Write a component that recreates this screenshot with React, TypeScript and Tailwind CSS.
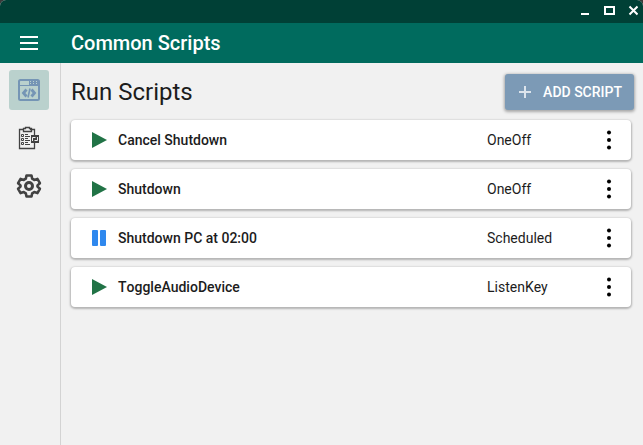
import React from "react";

type Script = { name: string; kind: string; running?: boolean };

const scripts: Script[] = [
  { name: "Cancel Shutdown", kind: "OneOff" },
  { name: "Shutdown", kind: "OneOff" },
  { name: "Shutdown PC at 02:00", kind: "Scheduled", running: true },
  { name: "ToggleAudioDevice", kind: "ListenKey" },
];

function TitleBar() {
  return (
    <div className="flex h-[23px] justify-end bg-[#004036] text-white">
      <button aria-label="Minimize" className="flex w-6 items-center justify-center">
        <svg width="12" height="13" viewBox="0 0 12 13" shapeRendering="crispEdges" aria-hidden="true">
          <path d="M2 8h8v2H2z" fill="currentColor" />
        </svg>
      </button>
      <button aria-label="Maximize" className="flex w-6 items-center justify-center">
        <svg width="12" height="13" viewBox="0 0 12 13" shapeRendering="crispEdges" aria-hidden="true">
          <path d="M1 1h11v9H1zM3 3v5h7V3z" fill="currentColor" fillRule="evenodd" />
        </svg>
      </button>
      <button aria-label="Close" className="flex w-[22px] items-center justify-center">
        <svg width="12" height="13" viewBox="0 0 12 13" aria-hidden="true">
          <path d="M3.500 1.500l8 8M11.500 1.500l-8 8" stroke="currentColor" strokeWidth="2" />
        </svg>
      </button>
    </div>
  );
}

function CodeWindowIcon() {
  return (
    <svg width="24" height="24" viewBox="0 0 24 24" fill="none" stroke="#7595b5" aria-hidden="true">
      <rect x="2" y="2" width="20" height="20" rx="1.5" strokeWidth="2" />
      <path d="M2 7.500h20" />
      <path d="M12 2h10v5H12z" fill="#7595b5" stroke="none" />
      <path d="M13 3h1v1h-1zM16 3h1v1h-1zM19 3h1v1h-1zM13 5h1v1h-1zM16 5h1v1h-1zM19 5h1v1h-1z" fill="#bad1cd" stroke="none" />
      <path d="M9.500 11.500l-3 3.500 3 3.500M14.500 11.500l3 3.500-3 3.500" strokeWidth="2.800" />
      <path d="M13 10.500l-2 9" strokeWidth="1.600" />
    </svg>
  );
}

function ClipboardIcon() {
  return (
    <svg width="24" height="24" viewBox="0 0 24 24" fill="none" stroke="#424242" aria-hidden="true">
      <path d="M7 3.500H2.500v19h15V17M17.500 9V3.500H13" strokeWidth="1.300" />
      <path d="M6.500 5.500v-3H8.500v-1h4v1h2v3z" strokeWidth="1.300" />
      <path d="M4.500 8.500h2v2h-2zM4.500 12.500h2v2h-2zM4.500 16.500h2v2h-2z" />
      <path d="M8 8.500h3M8 10.500h5M8 12.500h3M8 14.500h5M8 16.500h3M8 18.500h5" />
      <path d="M14 9h8v8h-8z" fill="#424242" stroke="none" />
      <path d="M15.500 15v-3.500h3M20.500 11v3.500h-3" stroke="#f1f1f1" />
    </svg>
  );
}

function GearIcon() {
  return (
    <svg width="26" height="26" viewBox="0 0 26 26" fill="none" stroke="#424242" aria-hidden="true">
      <path
        d="M10.500 2.500h5l.7 3.200 2 1.200 3.200-1 2.500 4.300-2.400 2.200v1.200l2.400 2.200-2.500 4.300-3.200-1-2 1.200-.7 3.200h-5l-.7-3.200-2-1.200-3.200 1-2.500-4.300 2.400-2.200v-1.200L2.100 10.200l2.500-4.300 3.200 1 2-1.200z"
        strokeWidth="2.600"
        strokeLinejoin="round"
      />
      <circle cx="13" cy="13" r="3.500" strokeWidth="3" />
    </svg>
  );
}

function Sidebar() {
  return (
    <nav aria-label="Sections" className="flex w-[61px] shrink-0 flex-col items-start gap-2 border-r border-[#d3d3d3] py-[7px] pl-[9px]">
      <button aria-label="Run scripts" aria-current="page" className="flex h-10 w-10 items-center justify-center rounded-[3px] bg-[#bad1cd]">
        <CodeWindowIcon />
      </button>
      <button aria-label="Script log" className="flex h-10 w-10 items-center justify-center">
        <ClipboardIcon />
      </button>
      <button aria-label="Settings" className="flex h-10 w-10 items-center justify-center">
        <GearIcon />
      </button>
    </nav>
  );
}

function ScriptRow({ script }: { script: Script }) {
  return (
    <li className="flex h-10 items-center rounded bg-white pl-5 text-sm text-[#1c1c1c] shadow-[0_1px_2px_1px_rgba(0,0,0,0.25)]">
      <button aria-label={(script.running ? "Pause " : "Run ") + script.name} className="mr-[11px] shrink-0">
        {script.running ? (
          <svg width="16" height="16" viewBox="0 0 16 16" className="block" fill="#2f88ee" aria-hidden="true">
            <rect x="1" width="6" height="16" rx="1" />
            <rect x="9" width="6" height="16" rx="1" />
          </svg>
        ) : (
          <svg width="16" height="16" viewBox="0 0 16 16" className="block" fill="#217346" aria-hidden="true">
            <path d="M1 0l15 8-15 8z" />
          </svg>
        )}
      </button>
      <span className="grow font-medium">{script.name}</span>
      <span className="w-[110px]">{script.kind}</span>
      <button aria-label={"More actions for " + script.name} className="mr-2.5 flex w-6 justify-center">
        <svg width="6" height="20" viewBox="0 0 6 20" className="block" fill="black" aria-hidden="true">
          <circle cx="3" cy="2.500" r="2" />
          <circle cx="3" cy="10" r="2" />
          <circle cx="3" cy="17.500" r="2" />
        </svg>
      </button>
    </li>
  );
}

export default function App() {
  return (
    <div className="min-h-screen bg-[#3a3a3a] font-['Roboto',sans-serif] [font-kerning:none]">
      <div className="flex min-h-screen flex-col overflow-hidden rounded-t-md bg-[#f1f1f1]">
        <TitleBar />
        <header className="flex h-10 items-center bg-[#006b5e] pl-5 text-white">
          <button aria-label="Open menu" className="mr-[33px]">
            <svg width="18" height="14" viewBox="0 0 18 14" className="block" fill="currentColor" aria-hidden="true">
              <path d="M0 0h18v2H0zM0 6h18v2H0zM0 12h18v2H0z" />
            </svg>
          </button>
          <h1 className="text-xl font-medium">Common Scripts</h1>
        </header>
        <div className="flex grow">
          <Sidebar />
          <main className="min-w-0 grow pt-[11px] pr-[9px] pl-2.5">
            <div className="flex h-9 items-center justify-between">
              <h2 className="text-2xl text-[#1c1c1c]">Run Scripts</h2>
              <button className="flex h-9 items-center gap-2.5 rounded-[3px] bg-[#7c9ab6] px-3 text-sm font-medium text-white shadow-[0_1px_3px_1px_rgba(0,0,0,0.3)]">
                <svg width="16" height="16" viewBox="0 0 16 16" fill="none" stroke="#dce4ec" strokeWidth="2" aria-hidden="true">
                  <path d="M8 2v12M2 8h12" />
                </svg>
                ADD SCRIPT
              </button>
            </div>
            <ul className="mt-2.5 mr-[3px] flex flex-col gap-[9px]">
              {scripts.map((script) => (
                <ScriptRow key={script.name} script={script} />
              ))}
            </ul>
          </main>
        </div>
      </div>
    </div>
  );
}
